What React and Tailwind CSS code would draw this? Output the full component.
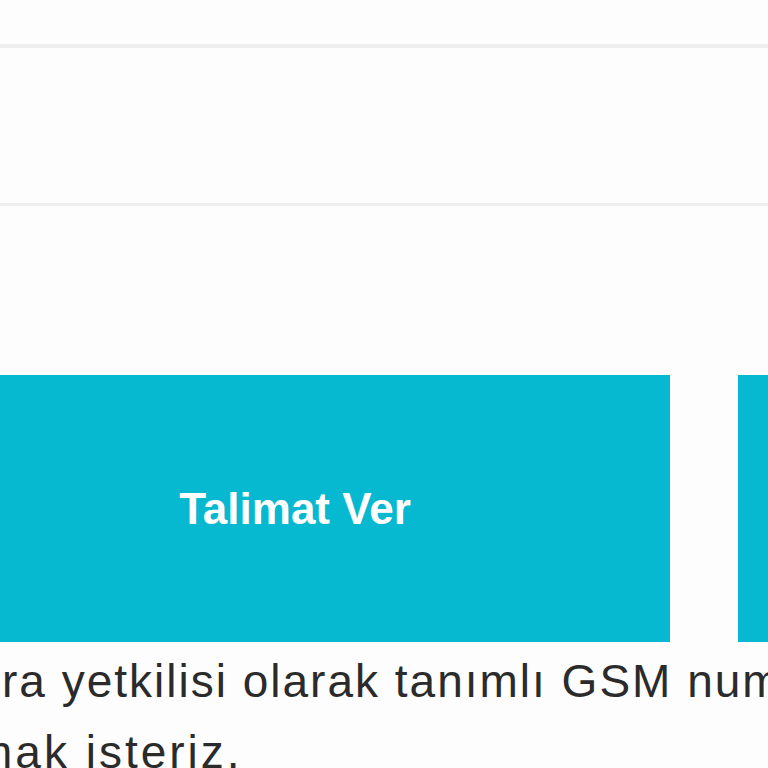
export default function App() {
  return (
    <div className="h-[768px] w-[768px] overflow-hidden bg-[#fdfdfd]" style={{ fontFamily: '"Liberation Sans", Arial, sans-serif' }}>
      <div className="h-[44px]" />
      <div className="h-[4px] bg-[#efefef]" />
      <div className="h-[155px]" />
      <div className="h-[3px] bg-[#ededed]" />
      <div className="h-[169px]" />

      {/* Butonlar */}
      <div className="-ml-[80px] flex h-[267px] gap-[68px]">
        <button className="flex h-full w-[750px] shrink-0 items-center justify-center bg-[#06b8d0] text-[44px] font-bold text-white">
          Talimat Ver
        </button>
        <div className="h-full flex-1 bg-[#06b8d0]" />
      </div>

      {/* Açıklama metni */}
      <div className="pt-[4px] text-[46px] leading-[71px] tracking-[2px] text-[#2b2b2b]">
        <div className="whitespace-nowrap pl-[2px]">ra yetkilisi olarak tanımlı GSM numaranıza SMS gönderilecektir.</div>
        <div className="-ml-[26px] whitespace-nowrap tracking-[3px]">mak isteriz.</div>
      </div>
    </div>
  );
}
